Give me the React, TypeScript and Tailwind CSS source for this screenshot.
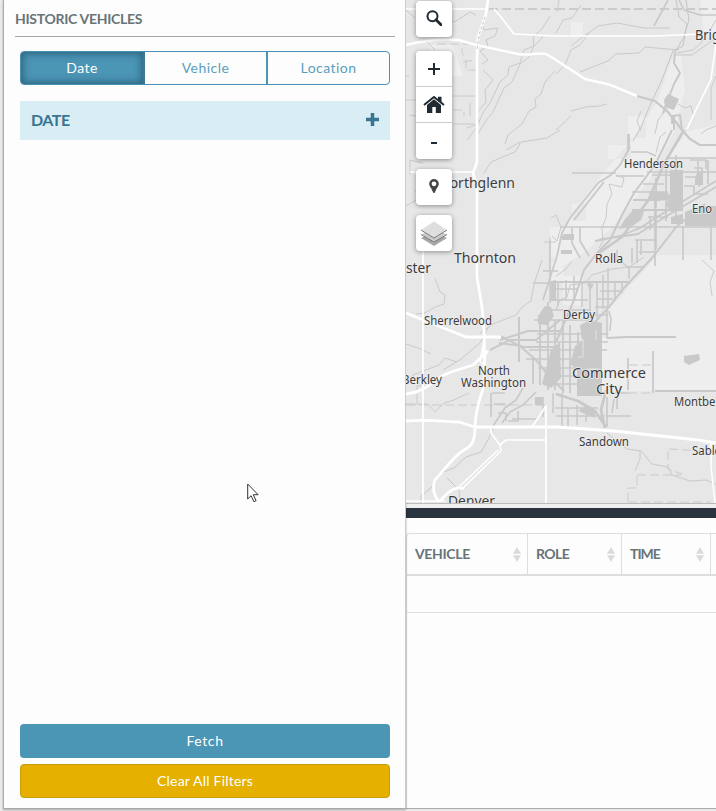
import React from 'react';

type Line = { d: string; w?: number; c?: string; dash?: string };

const terrain: Line[] = [
  { d: 'M406 76l3 0M425 40l10 10M453 96h22M453 124h24M470 103v13M476 15l-6 -3-14 9-13 3-12 12M406 10l9 8M482 24l2 6 14-2-3 8-9 4 2 6-8 5 8 9-6 4M483 70l10 10-8 10 1 12-9 11 2 11-12 4' },
  { d: 'M550 16l-8 13-9 8 1 9-10 4-4 13-11 4-1 8-8 7-10 21-6 8-8 17-9 12' },
  { d: 'M543 37l-9 9-5 11-9 7-8 18-8 6-11 24-6 7-11 18M555 71l-10 11-4 12-6 5 1 8-7 4-7 13-14 11-3 9' },
  { d: 'M581 5l-9 13-9 2-7 13M571 46l9-7 10-7 8-6 19-3 27 5 26 0M580 72l28-11 8-7 23-1 6-6 34 3M556 74l9-9 6-15 9-5 9-12' },
  { d: 'M571 111l15-4 13-1 8-2M556 130l15-14M557 12l2-12' },
  { d: 'M676 0l3 17 8 7-4 22-10 5-12 31-10 21-10 24-8 14M686 0l3 20-6 19-8 13', c: '#c5c5c5' },
  { d: 'M675 52l-1 11 6 10-6 11-7 18-4 11', w: 2, c: '#c9c9c9' },
  { d: 'M716 38l-13 9-11 8-18 0M716 20l-6 10-9 13-8 7-16 3M716 126l-10 4-5 4M678 104l7 4 6-2 2 8' },
  { d: 'M560 130l-13 8-26 4-6 10-10 4-14 6-7 11M520 142l-14 8M551 218l5-3 5 12-4 14-5-5M544 242h12M550 237v34' },
  { d: 'M435 278l5 14 5 3-1 9-9 3-10 6-9 1M480 333l13-9 23-9 6-8 9-6 3-17 8-24M406 344l15 5 10 5M443 370l18-11 19-16 8-15M406 384l7-9 26-10 6-7 12 4' },
  { d: 'M406 404h22l7 8 9-9 10-3 15-7M406 100h14M409 115l14 2M406 206l19-11 5-7M410 161v14M409 160l14 3M415 192l8-8 14 10' },
  { d: 'M556 310l4-10 7-3 3-12 15-2 7-8 20-6 17-2 15-10M702 260l12 11-4 11 2 14M716 76l-5 12v32' },
  { d: 'M607 433l20 16 14 2 11 13 16 3 4 8 18 6 16-1 14 6 8 24M640 451l0 8-5 12' },
  { d: 'M616 175l8 3-2 9-13-3 3 10-5 10-1 14-4 10 1 13-4 7M641 131l-4-10 4-10M655 134l3-14 11-14M656 153l4-16 6-5M556 276l10-7 6-8' },
  { d: 'M494 425l-5 13-8 14-15 5-12 11-14 5-9 15-10 8v10M447 478l12 12 1 13', c: '#c8c8c8' },
];

const boundaries: Line[] = [
  { d: 'M489 9h67M556 9H716', w: 1.8 },
  { d: 'M437 44h38M462 48v5l4 5v12h10M463 62l12-2M406 405H546M628 393h22M629 365h24M668 451v18l14 5M669 449l36 2M637 475h44M637 476v12h-9v15M628 502h83M453 110h11v6M417 403v-17l24-3' },
];

const streets: Line[] = [
  { d: 'M672 130l-17 35-21 28-12 22-12 25-13 13-13 17-10 30-18 42', w: 2 },
  { d: 'M684 130l-20 34-15 35-27 38-26 18', w: 2.6 },
  { d: 'M716 181l-36 22-23 14-17 11-20 8-25 5M716 187l-36 21-23 14-19 12-35 5', w: 1.8 },
  { d: 'M629 134v15l-9 16-9 10-13 8-28 35-8 15-5 23-14 44M604 182l-30 38', w: 1.8 },
  { d: 'M705 204l-28 22-25 32-28 30-15 19-16 17', w: 2 },
  { d: 'M637 96l18 5 13 11 14 18 8 9 10 6h16', w: 2.2 },
  { d: 'M572 173h44M631 152l16 0 9 4M616 176l28 0M647 172h69M668 158h48M560 227h156M580 227v14l9 15', w: 1.7 },
  { d: 'M633 200h27M632 210h51M606 239h-5M556 282h72M607 338l20-1h49M653 351v42M628 358v32M655 391h61', w: 1.8 },
  { d: 'M500 340l28-9h32M490 350l20-10 26 0 24-20M500 336l20 10 16 14 13 16 15 15M499 343l23 3M519 317v45M520 347h35', w: 2 },
  { d: 'M523 388l-7 12-11 8-12 18M536 392l-13 13-13 7-8 11M491 393v24M492 393h13M498 413h8v8M512 419h26M508 421h10v-10M494 404h11', w: 1.7 },
  { d: 'M672 124v-8l8-1 2 15M674 115v15', w: 2 },
  { d: 'M556 394l22 7 17 10 11 16M606 390l-5 20 4 18', w: 2.8 },
  { d: 'M553 393v20M562 393v33M568 408v20M577 405v20M586 410v12M555 408h43M556 416h49M606 416h25M543 397v20', w: 1.5 },
  { d: 'M550 240v63M558 282v24M566 280v20M574 276v24M582 284v23M590 282v36M597 282v38M603 275v34M608 268v40M615 281v20M622 282v11M629 267v12', w: 1.5 },
  { d: 'M602 282h24M600 291h21M597 299h16M595 307h14M592 315h16M607 310v28M609 311l2 8-1 12M621 262l7 5h15M543 271h15M533 283h20', w: 1.5 },
  { d: 'M533 384v-27M540 385v-62M548 390v-88M555 390v-70M563 393v-72M570 393v-68M578 393v-61M585 393v-53M593 393v-57', w: 1.8 },
  { d: 'M537 334h71M536 342h72M529 350h78M526 359h76M538 368h64M545 376h53M547 384h45M534 320h59M545 310h46M550 300h38M550 289h28', w: 1.4 },
  { d: 'M632 192h36M643 184h21M652 175h26M659 166h23M655 200v26M656 178v30M666 164v57M676 155v65M690 160h16v9M694 168h8v8M685 177h14v10M684 186h10v8h14M698 161v12M708 160v24M656 210v39', w: 1.7 },
  { d: 'M683 226v34M711 220v40M637 240v23M641 241v14M632 248v15M655 226v40M650 216v14M617 250v12M635 240h20M648 217h20M654 252h-15', w: 1.6 },
  { d: 'M679 0l5 10 16 5h16M668 0l-14 26M682 130l8 9M628 134v18M572 228v15l8 15M655 391h61M607 397v30M614 399l-2 14M617 397v12M628 393h-18', w: 1.6 },
];

const roads: Line[] = [
  { d: 'M406 9h81M494 9l7 8 13 17 42 2h100l45-2M410 172h65M423 215V503M546 405v98M491 426l0 7 9 12 6-5h40M532 427l14-21M716 44l-5 35-16 33-8 17', w: 1.7 },
  { d: 'M406 45c16-4 32-7 53-5l17 5 42 9c12 2 19-2 28 0l10 6 29 19c10 3 18 3 28 7l24 10', w: 2.6 },
  { d: 'M488 0l-2 14-8 23-1 20V162l-4 11 4 15V277l5 30 2 23 1 55', w: 2.7 },
  { d: 'M485 353l-1 32c-2 10-8 18-9 42 0 12-2 19-11 23-9 5-21 21-29 30-3 7-2 14 4 22M440 501c8-9 16-16 24-12M406 313l60 24h35M406 394c24-3 25-15 45-22l22-7 15-14M406 421c25-2 40 1 53 1l16 5h82l57 4 84 9 18 3', w: 2.8 },
  { d: 'M500 445l1 6-39 38M498 450l-39 37M711 442v24l4 37M406 501h39M484 341l-4 20 9 11', w: 1.5 },
];

function Strokes({ lines, color, dash }: { lines: Line[]; color: string; dash?: string }) {
  return <g fill="none" stroke={color} strokeLinejoin="round" strokeDasharray={dash}>
    {lines.map((line, i) => <path key={i} d={line.d} stroke={line.c || color} strokeWidth={line.w || 1} />)}
  </g>;
}

const places = [
  { name: 'Brighton', x: 695, y: 40, size: 14, width: 53 },
  { name: 'Henderson', x: 624, y: 168, size: 12, width: 59 },
  { name: 'Northglenn', x: 439, y: 188, size: 14, width: 76 },
  { name: 'Eno', x: 692, y: 213, size: 12, width: 20 },
  { name: 'Thornton', x: 454, y: 263, size: 14, width: 62 },
  { name: 'Rolla', x: 595, y: 263, size: 12, width: 28 },
  { name: 'ster', x: 406, y: 273, size: 14, width: 25 },
  { name: 'Derby', x: 563, y: 319, size: 12, width: 32 },
  { name: 'Sherrelwood', x: 424, y: 325, size: 12, width: 68 },
  { name: 'North', x: 478, y: 375, size: 12, width: 32 },
  { name: 'Washington', x: 461, y: 387, size: 12, width: 65 },
  { name: 'Berkley', x: 402, y: 384, size: 12, width: 40 },
  { name: 'Commerce', x: 572, y: 378, size: 14, width: 74 },
  { name: 'City', x: 596, y: 394, size: 14, width: 26 },
  { name: 'Montbello', x: 674, y: 406, size: 12, width: 54 },
  { name: 'Sandown', x: 579, y: 446, size: 12, width: 50 },
  { name: 'Sable', x: 692, y: 455, size: 12, width: 29 },
  { name: 'Denver', x: 448, y: 506, size: 14, width: 47 },
];

function MapCanvas() {
  return <svg className="block h-[503px] w-[310px]" viewBox="406 0 310 503">
    <path fill="#e7e7e7" d="M406 0h310v503H406z" />
    <g fill="#eeeeee">
      <path d="M716 255h-58l-49 54v29h-3v53h110zM674 54l-17 48-24 37-14 15-45 56-15 28-8 35 30-18 32-28 37-48 25-49 10-40-4-35zM688 131l28-6v32h-49zM700 0h16v42l-12-8zM571 22h12v14h-12zM428 45h25l10 31h-19zM628 116h18v22h-18zM608 145h23v14h-23zM572 204h14v17h-14z" />
      <path d="M563 276h20v29h-20zM550 227h26v30h-26zM600 338h9v55h-9zM550 262h13v20h-13z" />
    </g>
    <Strokes lines={terrain} color="#cacaca" />
    <Strokes lines={boundaries} color="#cbcbcb" dash="9 4" />
    <path fill="#c9c9c9" d="M668 94l11 5-5 11-9-3-1-7zM670 170l13 0v39l-12 3-5-7 4-10zM650 191l18 2 5 7-25 1zM634 209l11 0-4 11-10 7-12 2 6-10zM671 217l12-3 0 10h-12zM685 212l15-6 16 0v20h-31zM697 173h6v12h-8v-7zM564 234h10v6h-12v-4zM561 250h11v4h-11zM587 283l7 1-4 7zM538 316l7-10 6 1 3 9-7 9-9-1zM551 281l5-1v21h-5zM580 325l10-5 12 3v73h-25v-27l-7-5 5-18 7-5zM551 350l9-8 1 36-10 10-9-4zM684 356l15-2 1 6-11 5-5-3zM535 397h8v8h-8zM585 406l10 6v6l-17-7z" />
    <Strokes lines={streets} color="#c9c9c9" />
    <path d="M583 339l0 18h-5M587 369h12M596 330v10" fill="none" stroke="#e3e3e3" strokeWidth="1" />
    <Strokes lines={roads} color="#fff" />
    <path d="M485 17l-6 18-2 15" fill="none" stroke="#c5c5c5" strokeDasharray="3 2" />
    <g fill="#3c3c3c" stroke="#eee" strokeWidth="1.5" paintOrder="stroke" className="font-['Noto_Sans','Open_Sans',sans-serif]">
      {places.map(p => <text key={p.name} x={p.x} y={p.y} fontSize={p.size} textLength={p.width} lengthAdjust="spacingAndGlyphs">{p.name}</text>)}
    </g>
  </svg>;
}

const controlClass = "flex h-9 w-9 items-center justify-center bg-white text-[#202a33]";

function SearchIcon() {
  return <svg className="relative -top-px" width="16" height="16" viewBox="0 0 16 16"><circle cx="6.5" cy="6.2" r="5" fill="none" stroke="currentColor" strokeWidth="2" /><path d="M10 9.7l5 5" stroke="currentColor" strokeWidth="2.8" strokeLinecap="round" /></svg>;
}

function HomeIcon() {
  return <svg width="22" height="18" viewBox="0 0 22 18"><path d="M1 9L11 1l10 8" fill="none" stroke="currentColor" strokeWidth="2" /><path d="M15 .7h3.5v6L15 4zM4 8.9L11 3.3l7 5.6V17h-5.2v-6H9.3v6H4z" fill="currentColor" /></svg>;
}

function LayersIcon() {
  return <svg width="26" height="26" viewBox="0 0 26 26"><path d="M0 17l13 8 13-8-13-6z" fill="#aaa5a5" /><path d="M0 13l13 8 13-8-13-6z" fill="#c9c9c9" stroke="#fff" strokeWidth=".8" /><path d="M0 13.5l13 7.5 13-7.5" fill="none" stroke="#6f6f6f" /><path d="M0 8.8l13 8 13-8L13 0z" fill="#dedede" stroke="#fff" strokeWidth=".7" /><path d="M0 9l13 8 13-8" fill="none" stroke="#777" /></svg>;
}

function Controls() {
  return <div className="absolute left-[10px] top-px flex flex-col">
    <button className={`${controlClass} rounded shadow-[0_1px_5px_rgba(0,0,0,0.4)]`}><SearchIcon /></button>
    <div className="mt-[14px] overflow-hidden rounded shadow-[0_1px_5px_rgba(0,0,0,0.4)]">
      <button className={`${controlClass} border-b border-[#ccc]`}><svg width="12" height="12" viewBox="0 0 12 12"><path d="M6 0v12M0 6h12" stroke="currentColor" strokeWidth="2" /></svg></button>
      <button className={`${controlClass} border-b border-[#ccc]`}><HomeIcon /></button>
      <button className={controlClass}><span className="mt-[3px] h-0.5 w-1.5 bg-[#202a33]" /></button>
    </div>
    <button className={`${controlClass} mt-[10px] rounded pb-[2px] shadow-[0_1px_5px_rgba(0,0,0,0.4)]`}><svg width="10" height="14" viewBox="0 0 10 14"><path fillRule="evenodd" d="M5 0a4.8 4.8 0 0 0-4.8 4.8C.2 7.5 2.6 9 4 13.2Q5 15 6 13.2C7.4 9 9.8 7.5 9.8 4.8A4.8 4.8 0 0 0 5 0zm0 2.4a2.4 2.4 0 1 1 0 4.8 2.4 2.4 0 0 1 0-4.8z" fill="#444" /></svg></button>
    <button className={`${controlClass} mt-[10px] rounded pt-px shadow-[0_1px_5px_rgba(0,0,0,0.4)]`}><LayersIcon /></button>
  </div>;
}

function Sort() {
  return <svg width="8" height="15" viewBox="0 0 8 15" fill="#dadada"><path d="M4 0l4 6.7H0zM0 8.3h8L4 15z" /></svg>;
}

export default function App() {
  return <main className="flex h-[811px] w-[716px] overflow-hidden bg-[#eaeaea] pl-[3px] font-['Lato',sans-serif] text-[#687478]">
    <aside className="relative flex h-[809px] w-[403px] shrink-0 flex-col border-x border-b border-[#aaa] border-r-[#ccc] bg-[#fdfdfd] shadow-[0_1px_2px_rgba(0,0,0,0.3)]">
      <header className="ml-[11px] flex h-[37px] w-[380px] items-center border-b border-[#a5a5a5] pt-[2px]"><h1 className="text-[14px] font-bold leading-5 tracking-[-0.3px]">HISTORIC VEHICLES</h1></header>
      <nav className="ml-4 mt-[14px] flex h-[34px] w-[370px] overflow-hidden rounded-[4px] border border-[#4a90b0] text-[14px] tracking-[0.45px] text-[#5b9dbc]">
        <button className="h-full w-[124px] border-r-2 border-[#3e7895] bg-[#4b95b5] pb-[2px] text-white shadow-[inset_0_0_7px_2px_rgba(15,55,75,0.5)]">Date</button>
        <button className="w-[123px] border-r-2 border-[#4b95b5] pb-[2px]">Vehicle</button>
        <button className="flex-1 pb-[2px]">Location</button>
      </nav>
      <section className="ml-4 mt-4 flex h-[39px] w-[370px] items-center justify-between bg-[#d9edf5] pb-[2px] pl-[11px] pr-[11px] text-[#397591]"><h2 className="text-[16px] font-bold tracking-[-0.5px]">DATE</h2><svg width="13" height="13" viewBox="0 0 13 13"><path d="M6.5 0v13M0 6.5h13" stroke="currentColor" strokeWidth="3.5" /></svg></section>
      <div className="ml-4 mt-auto mb-[10px] flex w-[370px] flex-col gap-[6px] text-[14px] tracking-[0.6px] text-white">
        <button className="h-[34px] rounded-[4px] bg-[#4b95b5] pb-[2px]">Fetch</button>
        <button className="h-[34px] rounded-[4px] border border-[#c99d08] bg-[#e5b000] pb-[2px] tracking-[0.2px]">Clear All Filters</button>
      </div>
      <svg className="absolute left-[243px] top-[483px]" width="12" height="20" viewBox="0 0 12 20"><path d="M.7 1v15l3.4-3.3 2.8 6 2.2-1-2.8-6h4.8z" fill="white" stroke="#333" /></svg>
    </aside>
    <section className="flex h-[809px] w-[310px] shrink-0 flex-col border-b border-[#aaa] bg-[#fdfdfd]">
      <div className="relative h-[503px] shrink-0 overflow-hidden"><MapCanvas /><Controls /></div>
      <div className="h-[5px] shrink-0 border-t border-[#bbb] bg-[#eeefee]" />
      <div className="h-[10px] shrink-0 bg-[#29343e]" />
      <div className="mt-[15px] h-[275px] w-[330px] shrink-0 rounded-tl-[4px] border-l border-t border-[#ddd]">
        <div className="flex h-[42px] border-b-2 border-[#ddd] text-[14px] font-bold text-[#687478]">
          <div className="flex w-[121px] items-center justify-between border-r border-[#ddd] pl-2 pr-[6px]"><span className="pb-[2px] tracking-[-0.35px]">VEHICLE</span><Sort /></div>
          <div className="flex w-[94px] items-center justify-between border-r border-[#ddd] pl-2 pr-[6px]"><span className="pb-[2px] tracking-[-0.6px]">ROLE</span><Sort /></div>
          <div className="flex w-[89px] items-center justify-between border-r border-[#ddd] pl-2 pr-[6px]"><span className="pb-[2px] tracking-[-1px]">TIME</span><Sort /></div>
        </div>
        <div className="h-[37px] border-b border-[#ddd]" />
      </div>
    </section>
  </main>;
}
